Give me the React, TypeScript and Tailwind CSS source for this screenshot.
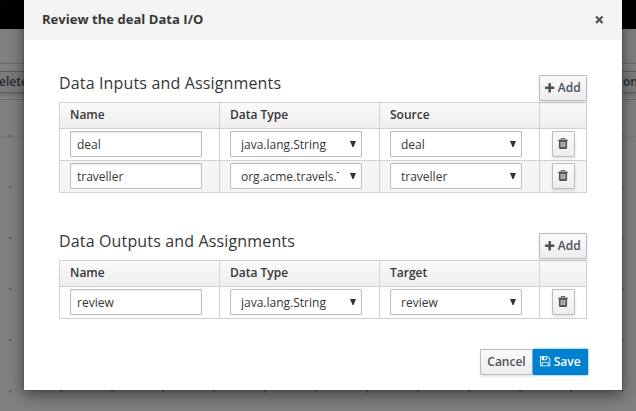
import React from "react";

const PLUS =
  "M1600 736v192q0 40-28 68t-68 28h-416v416q0 40-28 68t-68 28h-192q-40 0-68-28t-28-68v-416h-416q-40 0-68-28t-28-68v-192q0-40 28-68t68-28h416v-416q0-40 28-68t68-28h192q40 0 68 28t28 68v416h416q40 0 68 28t28 68z";
const TRASH =
  "M704 1376v-704q0-14-9-23t-23-9h-64q-14 0-23 9t-9 23v704q0 14 9 23t23 9h64q14 0 23-9t9-23zm256 0v-704q0-14-9-23t-23-9h-64q-14 0-23 9t-9 23v704q0 14 9 23t23 9h64q14 0 23-9t9-23zm256 0v-704q0-14-9-23t-23-9h-64q-14 0-23 9t-9 23v704q0 14 9 23t23 9h64q14 0 23-9t9-23zm-544-992h448l-48-117q-7-9-17-11h-317q-10 2-17 11zm928 32v64q0 14-9 23t-23 9h-96v948q0 83-47 143.500t-113 60.500h-832q-66 0-113-58.500t-47-141.500v-952h-96q-14 0-23-9t-9-23v-64q0-14 9-23t23-9h309l70-167q15-37 54-63t79-26h320q40 0 79 26t54 63l70 167h309q14 0 23 9t9 23z";
const FLOPPY =
  "M512 1536h768v-384h-768v384zm896 0h128v-896q0-14-10-38.500t-20-34.500l-281-281q-10-10-34-20t-39-10v416q0 40-28 68t-68 28h-576q-40 0-68-28t-28-68v-416h-128v1280h128v-416q0-40 28-68t68-28h832q40 0 68 28t28 68v416zm-384-928v-320q0-13-9.500-22.500t-22.500-9.500h-192q-13 0-22.500 9.500t-9.500 22.500v320q0 13 9.500 22.500t22.500 9.500h192q13 0 22.500-9.500t9.500-22.500zm640 32v928q0 40-28 68t-68 28h-1344q-40 0-68-28t-28-68v-1344q0-40 28-68t68-28h928q40 0 88 20t76 48l280 280q28 28 48 76t20 88z";

const BUTTON =
  "flex h-[26px] items-center justify-center rounded-[1px] border border-[#bbb] bg-linear-to-b from-[#fafafa] to-[#ededed] text-[12px] leading-none font-semibold text-[#4d5258] shadow-[0_2px_3px_rgba(3,3,3,0.1)]";

function Icon({ path, viewBox, size }: { path: string; viewBox: string; size: string }) {
  return (
    <svg viewBox={viewBox} className={`shrink-0 ${size}`} fill="currentColor">
      <path d={path} />
    </svg>
  );
}

function Select({ value }: { value: string }) {
  return (
    <div className="flex h-[26px] w-[132px] items-center rounded-[1px] border border-[#bbb] bg-white pr-[5px] pl-[10px]">
      <span className="w-[98px] shrink-0 overflow-hidden pt-[2px] leading-5 whitespace-nowrap">{value}</span>
      <svg viewBox="0 0 6 6" className="ml-auto h-[6px] w-[6px]" fill="#333">
        <path d="M0 0H6L3.500 6H2.500Z" />
      </svg>
    </div>
  );
}

type Row = { name: string; type: string; target: string };

function Assignments({ title, column, rows }: { title: string; column: string; rows: Row[] }) {
  return (
    <section className="w-[528px]">
      <div className="flex h-[27px] items-start justify-between">
        <h3 className="text-[16px] leading-[17px] tracking-[0.15px] text-[#363636]">{title}</h3>
        <button className={`${BUTTON} w-12 gap-[3px]`}>
          <Icon path={PLUS} viewBox="192 128 1408 1408" size="h-[9.400px] w-[9.400px]" />
          <span>Add</span>
        </button>
      </div>
      <div className="border-t border-l border-[#d1d1d1]">
        <div className="grid h-[26px] grid-cols-[160px_160px_160px_47px] bg-linear-to-b from-[#fafafa] to-[#ededed] leading-6 font-semibold">
          <div className="border-r border-b border-[#d1d1d1] pl-[10px]">Name</div>
          <div className="border-r border-b border-[#d1d1d1] pl-[10px]">Data Type</div>
          <div className="border-r border-b border-[#d1d1d1] pl-[10px]">{column}</div>
          <div className="border-r border-b border-[#d1d1d1]" />
        </div>
        {rows.map((row) => (
          <div
            key={row.name}
            className="grid h-8 grid-cols-[160px_160px_160px_47px] bg-white odd:bg-[#f5f5f5]"
          >
            <div className="border-r border-b border-[#d1d1d1] pt-[2px] pl-[10px]">
              <div className="flex h-[26px] w-[132px] items-center rounded-[1px] border border-[#bbb] bg-white px-[6px] pt-[2px] shadow-[inset_0_1px_1px_rgba(3,3,3,0.075)]">
                {row.name}
              </div>
            </div>
            <div className="border-r border-b border-[#d1d1d1] pt-[2px] pl-[10px]">
              <Select value={row.type} />
            </div>
            <div className="border-r border-b border-[#d1d1d1] pt-[2px] pl-[10px]">
              <Select value={row.target} />
            </div>
            <div className="border-r border-b border-[#d1d1d1] pt-[2px] pl-3">
              <button className={`${BUTTON} w-[23px]`}>
                <Icon path={TRASH} viewBox="192 128 1408 1536" size="mr-px mb-px h-[11px] w-[10px]" />
              </button>
            </div>
          </div>
        ))}
      </div>
    </section>
  );
}

function Editor() {
  return (
    <div className="flex h-full flex-col bg-[#808080] text-[12px] font-semibold text-[#272a2d]">
      <div className="h-[29px] shrink-0 bg-[#020202]" />
      <div className="h-[35px] shrink-0 border-b border-[#696969]" />
      <div className="flex h-9 shrink-0 items-start justify-between border-b border-[#6d6d6d] pt-[7px]">
        <div className="flex h-[22px] w-10 items-center border-y border-[#5c5c5c] bg-[#7b7b7b] shadow-[0_2px_3px_rgba(3,3,3,0.15)]">
          <span className="-ml-px">elete</span>
        </div>
        <div className="flex h-[22px] w-[13px] items-center overflow-hidden border-y border-[#5c5c5c] bg-[#7b7b7b] shadow-[0_2px_3px_rgba(3,3,3,0.15)]">
          <span>on</span>
        </div>
      </div>
      <div className="h-[37px] shrink-0 border-b border-[#777]" />
      <svg className="-mt-1 h-[278px] w-full shrink-0" fill="#585858">
        <defs>
          <pattern id="grid" width="51" height="51" patternUnits="userSpaceOnUse" x="9" y="2">
            <path d="M0 0H2.500L1.500 2.500H.5Z" />
          </pattern>
        </defs>
        <rect width="636" height="278" fill="url(#grid)" />
      </svg>
    </div>
  );
}

export default function App() {
  return (
    <div className="relative h-[411px] w-[636px] overflow-hidden font-['Open_Sans','Noto_Sans',sans-serif]">
      <Editor />
      <div className="absolute top-0 left-6 flex h-[390px] w-[598px] flex-col bg-white text-[12px] text-[#363636] shadow-[0_5px_15px_rgba(0,0,0,0.5),0_0_1px_rgba(0,0,0,0.6)]">
        <header className="flex h-10 shrink-0 items-center justify-between bg-[#f4f4f4] px-[18px]">
          <h2 className="mb-[2px] text-[13px] leading-5 font-bold tracking-[0.04px]">Review the deal Data I/O</h2>
          <svg viewBox="0 0 10 10" className="h-[10px] w-[10px]" fill="none" stroke="#4d5258" strokeWidth="2.200">
            <path d="M2 1.500L8.500 8M8.500 1.500L2 8" />
          </svg>
        </header>
        <div className="flex flex-col gap-10 pt-[35px] pl-[35px]">
          <Assignments
            title="Data Inputs and Assignments"
            column="Source"
            rows={[
              { name: "deal", type: "java.lang.String", target: "deal" },
              { name: "traveller", type: "org.acme.travels.Traveller", target: "traveller" },
            ]}
          />
          <Assignments
            title="Data Outputs and Assignments"
            column="Target"
            rows={[{ name: "review", type: "java.lang.String", target: "review" }]}
          />
        </div>
        <footer className="mt-[30px] flex justify-end pr-[34px]">
          <button className={`${BUTTON} w-[53px]`}>Cancel</button>
          <button className="flex h-[26px] w-[55px] items-center justify-center gap-[3px] rounded-[1px] border border-[#0080d0] bg-[#0080d0] text-[12px] font-semibold text-white shadow-[0_0_2px_#0080d0]">
            <Icon path={FLOPPY} viewBox="128 128 1536 1536" size="mb-px h-[10.300px] w-[10.300px]" />
            <span>Save</span>
          </button>
        </footer>
      </div>
    </div>
  );
}
